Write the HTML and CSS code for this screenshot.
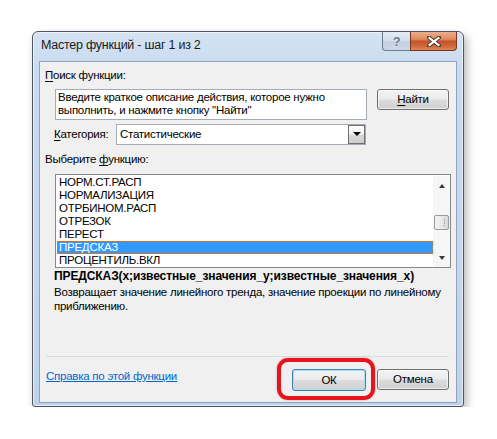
FILE: index.html
```html
<!DOCTYPE html>
<html lang="ru">
<head>
<meta charset="utf-8">
<title>Мастер функций</title>
<link rel="stylesheet" href="styles.css">
</head>
<body>
<div class="window">
  <div class="titlebar">
    <span class="title">Мастер функций - шаг 1 из 2</span>
    <div class="caption-btns">
      <div class="cbtn help">?</div>
      <div class="cbtn close">
        <svg width="14" height="11" viewBox="0 0 14 11"><path d="M2 1.5 L12 9.5 M12 1.5 L2 9.5" stroke="#4a3a34" stroke-width="4" stroke-linecap="square"/><path d="M2.5 2 L11.5 9 M11.5 2 L2.5 9" stroke="#ffffff" stroke-width="2.2" stroke-linecap="square"/></svg>
      </div>
    </div>
  </div>
  <div class="client">
    <div class="label first"><u>П</u>оиск функции:</div>
    <div class="search-row">
      <div class="textbox">Введите краткое описание действия, которое нужно<br>выполнить, и нажмите кнопку "Найти"</div>
      <div class="btn find"><u>Н</u>айти</div>
    </div>
    <div class="cat-row">
      <div class="cat-label"><u>К</u>атегория:</div>
      <div class="combo">
        <span class="combo-text">Статистические</span>
        <div class="combo-arrow"><span class="tri-down"></span></div>
      </div>
    </div>
    <div class="label choose">Выберите <u>ф</u>ункцию:</div>
    <div class="listbox">
      <div class="items">
        <div class="item">НОРМ.СТ.РАСП</div>
        <div class="item">НОРМАЛИЗАЦИЯ</div>
        <div class="item">ОТРБИНОМ.РАСП</div>
        <div class="item">ОТРЕЗОК</div>
        <div class="item">ПЕРЕСТ</div>
        <div class="item selected">ПРЕДСКАЗ</div>
        <div class="item">ПРОЦЕНТИЛЬ.ВКЛ</div>
      </div>
      <div class="scrollbar">
        <span class="arr up"></span>
        <div class="track">
          <div class="thumb"><span class="grip"></span></div>
        </div>
        <span class="arr down"></span>
      </div>
    </div>
    <div class="formula">ПРЕДСКАЗ(x;известные_значения_y;известные_значения_x)</div>
    <div class="desc">Возвращает значение линейного тренда, значение проекции по линейному<br>приближению.</div>
    <div class="sep"></div>
    <div class="footer">
      <a class="help-link" href="#">Справка по этой функции</a>
      <div class="ok-wrap">
        <div class="btn ok">ОК</div>
      </div>
      <div class="btn cancel">Отмена</div>
    </div>
  </div>
</div>
</body>
</html>
```

FILE: styles.css
```css
* { box-sizing: border-box; }
html, body { margin: 0; padding: 0; background: #ffffff; }
body {
  font-family: "Liberation Sans", Arial, sans-serif;
  font-size: 11.5px;
  letter-spacing: -0.25px;
  color: #000;
  padding: 31px 0 0 32px;
}
u { text-decoration: underline; text-underline-offset: 2px; }

.window {
  width: 432px;
  height: 376px;
  border: 1px solid #4d5661;
  border-radius: 6px 6px 3px 3px;
  background: linear-gradient(180deg, #d5e3f3 0%, #c8dbf0 10%, #bfd4ec 100%);
  box-shadow: 3px 4px 9px rgba(0,0,0,0.28), inset 0 0 0 1px rgba(255,255,255,0.55);
  padding: 0 6px 3px 6px;
  display: flex;
  flex-direction: column;
}

.titlebar {
  height: 29px;
  display: flex;
  justify-content: space-between;
  align-items: flex-start;
}
.title {
  padding: 6px 0 0 2px;
  line-height: 15px;
  color: #1a1a1a;
  font-size: 12.5px;
  letter-spacing: -0.25px;
}
.caption-btns { display: flex; }
.cbtn {
  height: 19px;
  display: flex;
  align-items: center;
  justify-content: center;
  border: 1px solid #6b7c90;
  border-top: none;
}
.help {
  width: 28px;
  border-radius: 0 0 0 4px;
  border-right: none;
  background: linear-gradient(180deg, #e3eaf3 0%, #d6e0ec 45%, #c2d0e0 55%, #ccd8e6 100%);
  color: #6c7888;
  font-weight: bold;
  font-size: 13px;
  text-shadow: 0 0 1px #fff;
}
.close {
  width: 47px;
  border-radius: 0 0 4px 0;
  border-color: #7a3520;
  background: linear-gradient(180deg, #eab08c 0%, #df8a5e 40%, #c5532a 52%, #cf6a3a 80%, #e08a55 100%);
}

.client {
  flex: 1;
  background: #f0f0f0;
  border: 1px solid #8fa3bd;
  padding: 6px 7px 0 5px;
}

.label { line-height: 15px; height: 15px; white-space: nowrap; }
.search-row {
  display: flex;
  align-items: flex-start;
  margin: 6px 0 0 10px;
}
.textbox {
  width: 312px;
  height: 31px;
  background: #fff;
  border: 1px solid #a5acb5;
  padding: 1px 0 0 2px;
  line-height: 13px;
  white-space: nowrap;
  overflow: hidden;
}
.btn {
  height: 21px;
  border: 1px solid #707070;
  border-radius: 3px;
  background: linear-gradient(180deg, #f3f3f3 0%, #ebebeb 48%, #dddddd 52%, #cfcfcf 100%);
  box-shadow: inset 0 0 0 1px rgba(255,255,255,0.6);
  display: flex;
  align-items: center;
  justify-content: center;
  line-height: 15px;
}
.find { width: 72px; margin-left: 10px; }

.cat-row {
  display: flex;
  align-items: flex-start;
  margin: 4px 0 0 9px;
  height: 21px;
}
.cat-label { width: 62px; padding-top: 3px; line-height: 15px; }
.combo {
  width: 250px;
  height: 21px;
  background: #fff;
  border: 1px solid #a5acb5;
  display: flex;
  justify-content: space-between;
  align-items: stretch;
}
.combo-text { padding: 2px 0 0 3px; line-height: 15px; }
.combo-arrow {
  width: 17px;
  border: 1px solid #6f6f6f;
  background: linear-gradient(180deg, #ffffff 0%, #f0f0f0 45%, #d8d8d8 55%, #cfcfcf 100%);
  display: flex;
  justify-content: center;
  padding-top: 6px;
}
.tri-down {
  width: 0; height: 0;
  border-left: 4px solid transparent;
  border-right: 4px solid transparent;
  border-top: 4px solid #000;
}

.choose { margin-top: 7px; }

.listbox {
  margin: 7px 0 0 10px;
  width: 396px;
  height: 94px;
  background: #fff;
  border: 1px solid #828790;
  display: flex;
  padding: 1px 0 0 1px;
}
.items { flex: 1; }
.item {
  height: 13px;
  line-height: 13px;
  padding-left: 2px;
}
.item.selected {
  background: #3399ff;
  color: #fff;
  outline: 1px dotted #c8752f;
  outline-offset: -1px;
}
.scrollbar {
  width: 17px;
  background: #f6f6f6;
  display: flex;
  flex-direction: column;
  align-items: center;
}
.arr {
  width: 0; height: 0;
  border-left: 3.5px solid transparent;
  border-right: 3.5px solid transparent;
}
.arr.up { border-bottom: 4px solid #3a3a3a; margin-top: 8px; }
.arr.down { border-top: 4px solid #3a3a3a; margin-bottom: 7px; }
.track { flex: 1; width: 100%; padding-top: 27px; }
.thumb {
  width: 15px;
  height: 15px;
  margin-left: 1px;
  border: 1px solid #9a9a9a;
  border-radius: 2px;
  background: linear-gradient(90deg, #f4f4f4 0%, #e6e6e6 60%, #d8d8d8 100%);
  position: relative;
}
.grip {
  position: absolute;
  right: 3px; top: 3px;
  width: 1px; height: 7px;
  border-left: 1px dotted #9a9a9a;
}

.formula {
  margin: 1px 0 0 9px;
  font-weight: bold;
  font-size: 12px;
  line-height: 15px;
  letter-spacing: -0.1px;
  white-space: nowrap;
}
.desc {
  margin: 1px 0 0 9px;
  line-height: 14px;
  white-space: nowrap;
}
.sep {
  margin: 43px 0 0 1px;
  width: 403px;
  height: 1px;
  background: #d5dce4;
}
.footer {
  display: flex;
  align-items: flex-start;
  margin-top: 12px;
}
.help-link {
  margin-left: 1px;
  line-height: 15px;
  color: #0066cc;
  text-decoration: underline;
  flex: 1;
}
.ok-wrap { position: relative; }
.ok-wrap::before {
  content: "";
  position: absolute;
  left: -15px; top: -11px; right: -9px; bottom: -9px;
  border: 4px solid #e8141c;
  border-radius: 11px;
  box-shadow: 0 0 2px rgba(150,0,0,0.4);
}
.ok {
  width: 74px;
  height: 22px;
  border-color: #3c7fb1;
  box-shadow: inset 0 0 0 1px #a8e0f6;
}
.cancel { width: 72px; margin-left: 11px; }
```
